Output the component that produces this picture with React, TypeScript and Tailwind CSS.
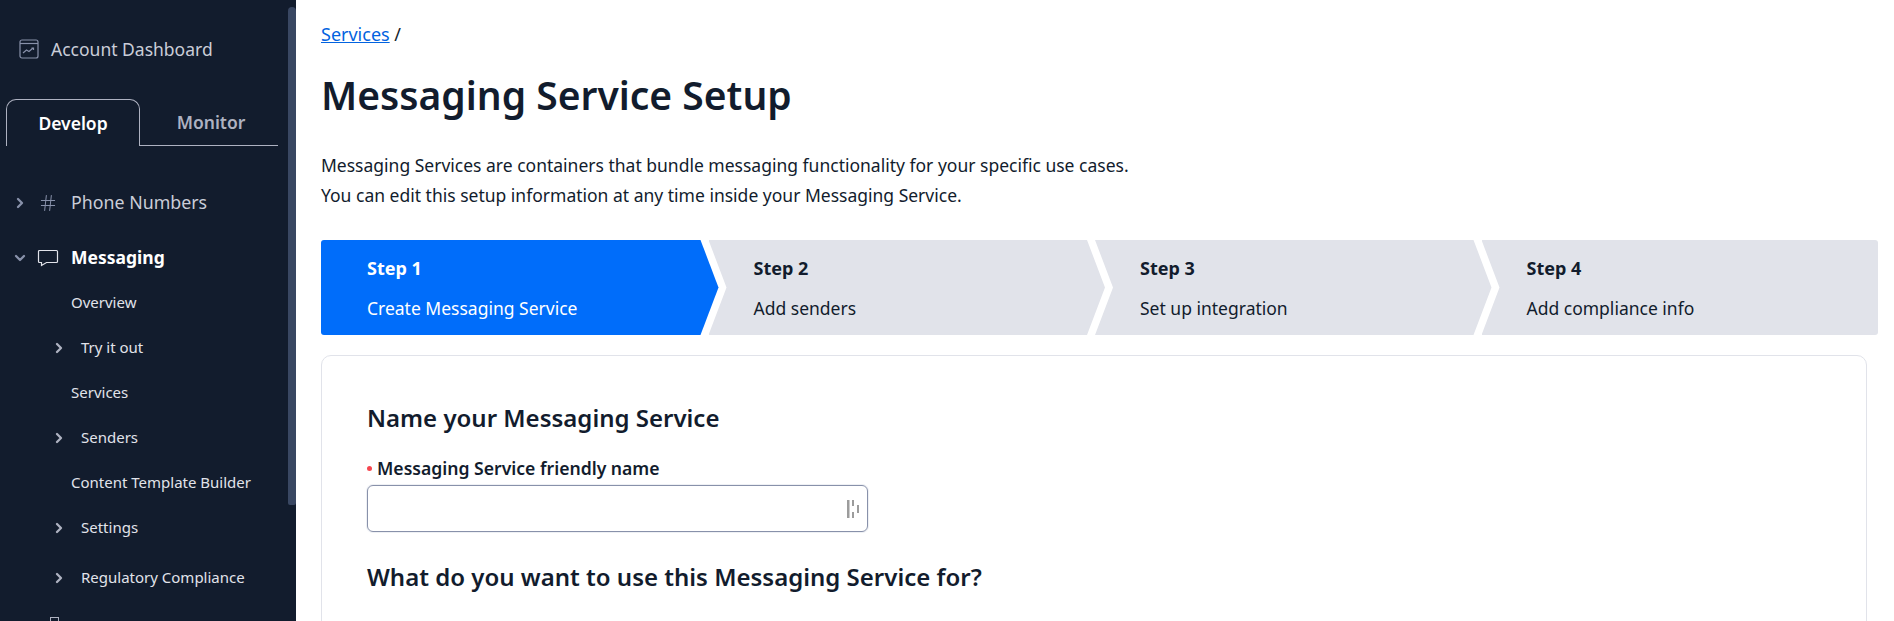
import { ChevronDown, ChevronRight, Hash } from "lucide-react";

const font = { fontFamily: '"Noto Sans", sans-serif' };

const steps = [
  {
    title: "Step 1",
    label: "Create Messaging Service",
    className:
      "bg-[#006dfa] pl-[46px] text-white rounded-l-[3px] [clip-path:polygon(0_0,calc(100%-18px)_0,100%_50%,calc(100%-18px)_100%,0_100%)]",
  },
  {
    title: "Step 2",
    label: "Add senders",
    className:
      "bg-[#e1e3ea] pl-[45px] text-[#121c2d] [clip-path:polygon(0_0,calc(100%-18px)_0,100%_50%,calc(100%-18px)_100%,0_100%,18px_50%)]",
  },
  {
    title: "Step 3",
    label: "Set up integration",
    className:
      "bg-[#e1e3ea] pl-[45px] text-[#121c2d] [clip-path:polygon(0_0,calc(100%-18px)_0,100%_50%,calc(100%-18px)_100%,0_100%,18px_50%)]",
  },
  {
    title: "Step 4",
    label: "Add compliance info",
    className:
      "bg-[#e1e3ea] pl-[45px] text-[#121c2d] rounded-r-[3px] [clip-path:polygon(0_0,100%_0,100%_100%,0_100%,18px_50%)]",
  },
];

function SubItem({ label, expandable, height = "h-[45px]" }: { label: string; expandable?: boolean; height?: string }) {
  return (
    <div className={`flex items-center ${height} text-[15px] text-[#e1e3ea]`}>
      {expandable ? (
        <>
          <ChevronRight className="ml-[51px] w-[16px] h-[16px] text-[#aeb2c1]" strokeWidth={3.5} />
          <span className="ml-[14px]">{label}</span>
        </>
      ) : (
        <span className="ml-[71px]">{label}</span>
      )}
    </div>
  );
}

function Sidebar() {
  return (
    <aside className="relative w-[296px] h-[621px] shrink-0 overflow-hidden bg-[#121c2d]">
      {/* scrollbar thumb */}
      <div className="absolute right-0 top-[7px] w-[8px] h-[498px] rounded-t-[4px] rounded-b-[2px] bg-[#394762]" />

      <div className="flex items-center h-[20px] mt-[40px] pl-[19px] text-[17.5px] text-[#cacdd8]">
        <svg className="-mt-[2px]" width="20" height="20" viewBox="0 0 20 20" fill="none" stroke="#8891aa" strokeWidth="1.2">
          <rect x="1" y="1" width="18" height="18" rx="2" />
          <path d="M1 4.5h18" />
          <path d="M4 14l3.5-3 2.5 1.5 4-3.5M12.5 9h2v2" />
        </svg>
        <span className="ml-[12px] -mt-[2px]">Account Dashboard</span>
      </div>

      <div className="flex mt-[39px] ml-[6px] mr-[18px] h-[47px] text-[17.5px]">
        <div className="flex items-center justify-center w-[134px] rounded-t-[10px] border-t border-x border-[#aeb2c1] font-semibold text-white">
          Develop
        </div>
        <div className="flex flex-1 items-center justify-center pl-[4px] border-b border-[#aeb2c1] font-semibold text-[#aeb2c1]">
          Monitor
        </div>
      </div>

      <div className="flex items-center h-[45px] mt-[34px] text-[17.8px] text-[#cacdd8]">
        <ChevronRight className="ml-[12px] w-[16px] h-[16px] text-[#8891aa]" strokeWidth={3.5} />
        <Hash className="ml-[10px] w-[20px] h-[20px] text-[#8891aa]" strokeWidth={1.2} />
        <span className="ml-[13px]">Phone Numbers</span>
      </div>

      <div className="flex items-center h-[45px] mt-[10px] text-[17.5px] font-bold text-white">
        <ChevronDown className="ml-[12px] w-[16px] h-[16px] text-[#8891aa]" strokeWidth={3.5} />
        <svg className="ml-[9px]" width="22" height="18" viewBox="0 0 22 18" fill="none" stroke="#e1e3ea" strokeWidth="1.2">
          <path d="M2.5 1.5h17a1 1 0 0 1 1 1v10a1 1 0 0 1-1 1H9.5L4.5 16.5v-3h-2a1 1 0 0 1-1-1v-10a1 1 0 0 1 1-1z" />
        </svg>
        <span className="ml-[12px]">Messaging</span>
      </div>

      <SubItem label="Overview" />
      <SubItem label="Try it out" expandable />
      <SubItem label="Services" />
      <SubItem label="Senders" expandable />
      <SubItem label="Content Template Builder" />
      <SubItem label="Settings" expandable />
      <SubItem label="Regulatory Compliance" expandable height="h-[55px]" />

      <div className="ml-[50px] mt-[12px] w-[9px] h-[9px] border border-[#aeb2c1]" />
    </aside>
  );
}

export default function App() {
  return (
    <div className="flex w-[1894px] h-[621px] overflow-hidden bg-white text-[#121c2d]" style={font}>
      <Sidebar />
      <main className="flex-1 pl-[25px] pr-[16px]">
        <div className="pt-[22px] text-[18px] leading-[24px]">
          <a className="text-[#0263e0] underline">Services</a> /
        </div>
        <h1 className="mt-[23px] text-[39px] leading-[52px] font-semibold">Messaging Service Setup</h1>
        <p className="mt-[29px] text-[17.5px] leading-[30px]">
          Messaging Services are containers that bundle messaging functionality for your specific use cases.
          <br />
          You can edit this setup information at any time inside your Messaging Service.
        </p>

        <div className="flex mt-[30px] h-[95px]">
          {steps.map((step, i) => (
            <div key={step.title} className={`flex-1 pt-[16px] ${i > 0 ? "-ml-[10px]" : ""} ${step.className}`}>
              <div className="text-[18px] leading-[24px] font-bold">{step.title}</div>
              <div className="mt-[16px] text-[17.5px] leading-[24px]">{step.label}</div>
            </div>
          ))}
        </div>

        <section className="mt-[20px] mr-[11px] h-[300px] rounded-t-[10px] border border-[#e1e3ea] pl-[45px] pt-[45px]">
          <h2 className="text-[24px] leading-[34px] font-semibold">Name your Messaging Service</h2>
          <label className="flex items-center mt-[23px] h-[20px] text-[17.6px] font-semibold">
            <span className="w-[5px] h-[5px] rounded-full bg-[#f6464f]" />
            <span className="ml-[5px]">Messaging Service friendly name</span>
          </label>
          <div className="flex items-center justify-end mt-[7px] w-[501px] h-[47px] pr-[7px] rounded-[6px] border border-[#8891aa] shadow-[0_0_0_1px_#eef0f4]">
            <svg width="13" height="18" viewBox="0 0 13 18" fill="#9c9c9c">
              <rect x="0" y="0" width="2.5" height="18" />
              <rect x="5" y="0" width="2" height="6" />
              <rect x="5" y="12" width="2" height="6" />
              <rect x="10" y="5" width="2" height="8" />
            </svg>
          </div>
          <h2 className="mt-[28px] text-[24px] leading-[34px] font-semibold">What do you want to use this Messaging Service for?</h2>
        </section>
      </main>
    </div>
  );
}
